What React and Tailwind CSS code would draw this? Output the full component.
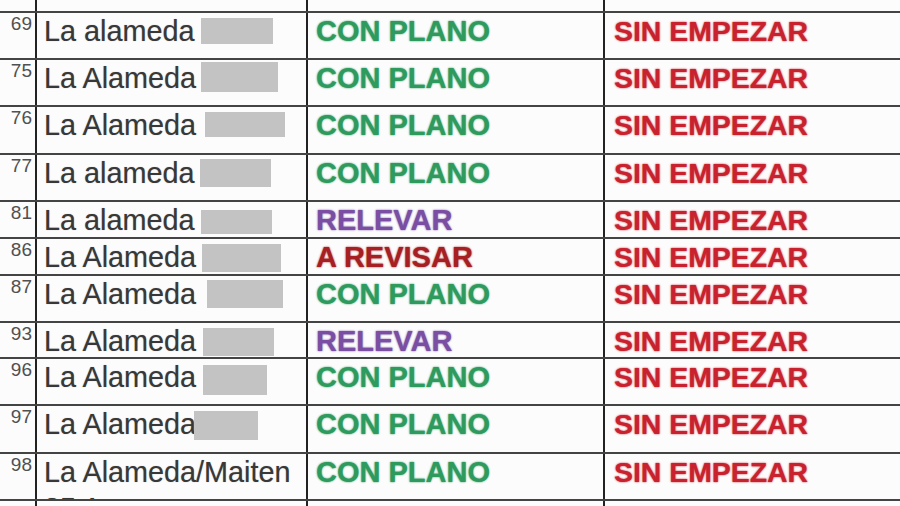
import React from "react";

// status -> text colour
const statusColor = {
  "CON PLANO": "text-[#2f9a5e]",
  RELEVAR: "text-[#7a4ea2]",
  "A REVISAR": "text-[#a61f22]",
  "SIN EMPEZAR": "text-[#c8222f]",
};

const rows = [
  { n: "69", name: "La alameda", status: "CON PLANO", h: "h-[47px]", box: "left-[164px] top-[5px] w-[72px] h-[26px]" },
  { n: "75", name: "La Alameda", status: "CON PLANO", h: "h-[47px]", box: "left-[164px] top-[2px] w-[77px] h-[30px]" },
  { n: "76", name: "La Alameda", status: "CON PLANO", h: "h-[48px]", box: "left-[168px] top-[5px] w-[80px] h-[25px]" },
  { n: "77", name: "La alameda", status: "CON PLANO", h: "h-[47px]", box: "left-[163px] top-[4px] w-[71px] h-[28px]" },
  { n: "81", name: "La alameda", status: "RELEVAR", h: "h-[37px]", box: "left-[164px] top-[8px] w-[71px] h-[24px]" },
  { n: "86", name: "La Alameda", status: "A REVISAR", h: "h-[37px]", box: "left-[165px] top-[5px] w-[79px] h-[28px]" },
  { n: "87", name: "La Alameda", status: "CON PLANO", h: "h-[47px]", box: "left-[170px] top-[4px] w-[76px] h-[28px]" },
  { n: "93", name: "La Alameda", status: "RELEVAR", h: "h-[36px]", box: "left-[166px] top-[5px] w-[71px] h-[28px]" },
  { n: "96", name: "La Alameda", status: "CON PLANO", h: "h-[47px]", box: "left-[166px] top-[6px] w-[64px] h-[30px]" },
  { n: "97", name: "La Alameda", status: "CON PLANO", h: "h-[48px]", box: "left-[157px] top-[5px] w-[64px] h-[29px]" },
  { n: "98", name: "La Alameda/Maiten", extra: "35 A", status: "CON PLANO", h: "h-[47px]", box: null },
];

const Row = ({ row }) => (
  <div className={`grid grid-cols-[35px_271px_297px_1fr] border-t-2 border-[#444] ${row.h}`}>
    <div className="pr-[3px] pt-[1px] text-right text-[19px] leading-[19px] text-[#505050]">{row.n}</div>
    <div className="relative overflow-hidden border-l-2 border-[#222] pl-[7px] pt-[2px] text-[28.8px] leading-[32px] text-[#383838] [text-shadow:0_0_1px_rgba(0,0,0,0.35)]">
      <div className="whitespace-nowrap">{row.name}</div>
      {row.extra && <div className="mt-[4px] whitespace-nowrap">{row.extra}</div>}
      {row.box && <span className={`absolute bg-[#c3c3c3] ${row.box}`}></span>}
    </div>
    <div className={`border-l-2 border-[#222] pl-[8px] pt-[2px] text-[29px] font-bold leading-[32px] ${statusColor[row.status]} [text-shadow:0_0_2px_currentColor]`}>
      {row.status}
    </div>
    <div className={`border-l-2 border-[#222] pl-[9px] pt-[2px] text-[28.4px] font-bold leading-[32px] ${statusColor["SIN EMPEZAR"]} [text-shadow:0_0_2px_currentColor]`}>
      SIN EMPEZAR
    </div>
  </div>
);

const App = () => {
  return (
    <div className="h-[506px] w-[900px] overflow-hidden bg-[#fcfcfc] font-['Liberation_Sans',Arial,sans-serif]">
      {/* partial row above */}
      <div className="grid h-[11px] grid-cols-[35px_271px_297px_1fr]">
        <div></div>
        <div className="border-l-2 border-[#222]"></div>
        <div className="border-l-2 border-[#222]"></div>
        <div className="border-l-2 border-[#222]"></div>
      </div>
      {rows.map((row) => (
        <Row key={row.n} row={row} />
      ))}
      {/* cut row at the bottom */}
      <div className="grid h-[10px] grid-cols-[35px_271px_297px_1fr] border-t-2 border-[#444]">
        <div></div>
        <div className="border-l-2 border-[#222]"></div>
        <div className="border-l-2 border-[#222]"></div>
        <div className="border-l-2 border-[#222]"></div>
      </div>
    </div>
  );
};

export default App;
